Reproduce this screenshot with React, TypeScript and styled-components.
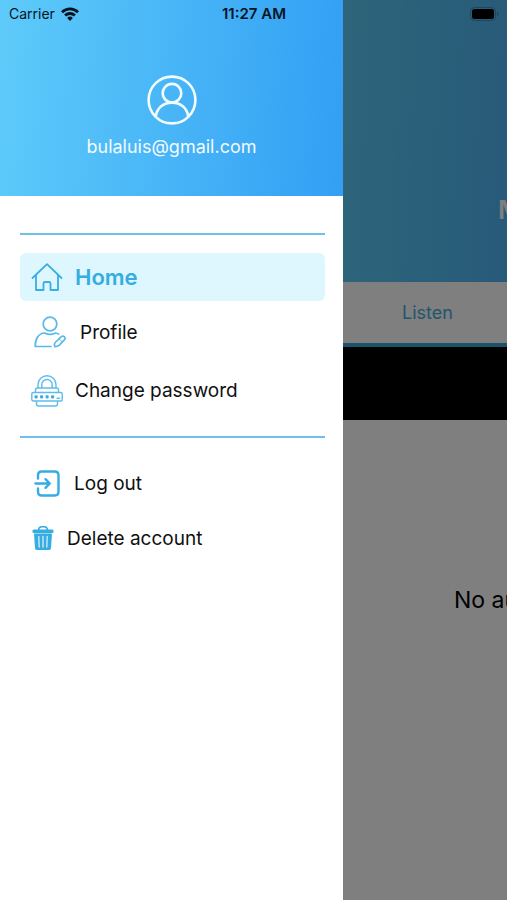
import React from "react";
import styled, { createGlobalStyle, css } from "styled-components";

const GlobalStyle = createGlobalStyle`
  *, *::before, *::after { box-sizing: border-box; }
  body { margin: 0; background: #fff; font-family: Inter, Roboto, sans-serif; color: #101010; }
  h1, p, ul { margin: 0; padding: 0; }
  button { font: inherit; color: inherit; border: 0; background: none; padding: 0; cursor: pointer; }
  svg { display: block; flex: none; }
`;

const Screen = styled.div`
  position: relative;
  display: flex;
  min-height: 100vh;
  overflow: hidden;
`;

const StatusBar = styled.div`
  position: absolute;
  inset: 0 0 auto 0;
  z-index: 2;
  display: grid;
  grid-template-columns: 1fr auto 1fr;
  align-items: center;
  height: 27px;
  padding: 0 8px 0 9px;
  color: #06141f;
  font-size: 14px;
`;

const Carrier = styled.span`
  display: flex;
  align-items: center;
  gap: 6px;
`;

const Clock = styled.span`
  font-size: 15px;
  font-weight: 600;
`;

const BatterySlot = styled.span`
  justify-self: end;
`;

const Drawer = styled.aside`
  flex: 0 0 343px;
  background: #fff;
`;

const Account = styled.header`
  display: flex;
  flex-direction: column;
  align-items: center;
  gap: 10px;
  height: 196px;
  padding-top: 75px;
  background: linear-gradient(94deg, #5ecbfa 0%, #329ff4 100%);
  color: #f2faff;
  font-size: 18px;
  line-height: 24px;
`;

const Nav = styled.nav`
  padding: 37px 18px 0 20px;
`;

const MenuGroup = styled.ul<{ $last?: boolean }>`
  list-style: none;
  border-top: 2px solid #6fc1eb;
  padding: 18px 0;
`;

const MenuItem = styled.button<{ $active?: boolean; $height: number; $gap: number; $inset: number }>`
  display: flex;
  align-items: center;
  width: 100%;
  height: ${(p) => p.$height}px;
  gap: ${(p) => p.$gap}px;
  padding-left: ${(p) => p.$inset}px;
  border-radius: 6px;
  font-size: 19px;
  text-align: left;
  ${(p) =>
    p.$active &&
    css`
      background: #def6fe;
      color: #33ade2;
      font-size: 22px;
      font-weight: 600;
    `}
`;

const Page = styled.main`
  position: relative;
  flex: 0 0 100%;
  background: #fff;
`;

const Scrim = styled.div`
  position: absolute;
  inset: 0;
  background: rgba(0, 0, 0, 0.5);
`;

const Hero = styled.header`
  height: 282px;
  padding: 194px 0 0 155px;
  background: linear-gradient(93deg, #5ecbf6 0%, #4db4f2 36%, #329ff4 100%);
  color: #fff;
`;

const Title = styled.h1`
  font-size: 26px;
  line-height: 32px;
  font-weight: 600;
`;

const Tabs = styled.div`
  display: grid;
  grid-template-columns: repeat(3, 1fr);
  border-bottom: 4px solid #37a6d8;
`;

const Tab = styled.button`
  && { color: #46aadb; }
  height: 61px;
  font-size: 18px;
`;

const Player = styled.section`
  height: 73px;
  background: #000;
`;

const Empty = styled.p`
  padding: 164px 0 0 111px;
  font-size: 23px;
  line-height: 32px;
  color: #000;
`;

const WifiIcon = () => (
  <svg width="18" height="14" viewBox="0 0 18 14" fill="none" stroke="currentColor" strokeWidth="2.8">
    <path d="M1 5.2C5.6.7 12.4.7 17 5.2" />
    <path d="M4.1 8.5c2.8-2.7 7-2.7 9.8 0" />
    <path d="M9 14 6.1 11a4.2 4.2 0 0 1 5.8 0Z" fill="currentColor" stroke="none" />
  </svg>
);

const BatteryIcon = () => (
  <svg width="29" height="14" viewBox="0 0 29 14" fill="none">
    <rect x=".5" y=".5" width="25" height="13" rx="4" stroke="#1e475b" />
    <rect x="2" y="2" width="22" height="10" rx="2.5" fill="#000" />
    <path d="M27 5c2 .6 2 3.4 0 4Z" fill="#1e475b" />
  </svg>
);

const AvatarIcon = () => (
  <svg width="50" height="50" viewBox="0 0 50 50" fill="none" stroke="#f2fbff" strokeWidth="2.6">
    <circle cx="25" cy="25" r="23.4" />
    <circle cx="25" cy="18.2" r="9.3" />
    <path d="M8.8 41.2C10 33 16.5 27.6 25 27.6S40 33 41.2 41.2" />
  </svg>
);

const HomeIcon = () => (
  <svg width="32" height="30" viewBox="0 0 32 30" fill="none" stroke="#3aaee2" strokeWidth="1.8" strokeLinejoin="round" strokeLinecap="round">
    <path d="M1.5 16 16 2.2 30.5 16" />
    <path d="M5 13.5V28h7.500v-6.500q0-1.500 1.500-1.500h4q1.500 0 1.500 1.500V28H27V13.500" />
  </svg>
);

const ProfileIcon = () => (
  <svg width="32" height="32" viewBox="0 0 32 32" fill="none" stroke="#5bb9ea" strokeWidth="1.7" strokeLinejoin="round" strokeLinecap="round">
    <circle cx="16" cy="8" r="6.8" />
    <path d="M17 30.5H1.2C1 22.5 5 17.2 10.5 17c3.5 1.8 7.5 1.8 11 0 1.2.1 2.3.5 3.2 1.2" />
    <path d="M20.8 30.6c-.7-1.7-.3-3.400.9-4.600l5.600-5.300c2.200-1.500 4.600.6 3.300 3l-5.300 5.400c-1.200 1.100-2.700 1.600-4.500 1.500Z" />
    <path d="m25 22.800 3.300 3.200" strokeWidth="1" />
  </svg>
);

const PasswordIcon = () => (
  <svg width="32" height="32" viewBox="0 0 32 32" fill="none" stroke="#5dbcec" strokeWidth="1.4" strokeLinejoin="round">
    <path d="M7 13V9.7a9 9 0 0 1 18 0V13" />
    <path d="M10.800 13V9.700a5.200 5.200 0 0 1 10.400 0V13" />
    <path d="M4.500 17.500V15a2 2 0 0 1 2-2h19a2 2 0 0 1 2 2v2.500M5.500 26v3a2 2 0 0 0 2 2h17a2 2 0 0 0 2-2v-3" />
    <rect x=".8" y="17.5" width="30.4" height="8.5" rx="1.5" />
    <g fill="#42abe4" stroke="none">
      <rect x="3.5" y="20.2" width="3.2" height="3.2" rx=".8" />
      <rect x="9" y="20.2" width="3.2" height="3.2" rx=".8" />
      <rect x="14.5" y="20.2" width="3.2" height="3.2" rx=".8" />
      <rect x="20" y="20.2" width="3.2" height="3.2" rx=".8" />
    </g>
    <path d="M25.5 23.3H29" />
  </svg>
);

const LogoutIcon = () => (
  <svg width="27" height="27" viewBox="0 0 27 27" fill="none" stroke="#35ace2" strokeWidth="2.4" strokeLinecap="round" strokeLinejoin="round">
    <path d="M4 8.500V5.200C4 2.800 5.300 1.500 7.700 1.500h13c2.400 0 3.800 1.300 3.800 3.700v16.600c0 2.400-1.400 3.700-3.800 3.700h-13C5.300 25.500 4 24.200 4 21.800v-3.300" />
    <path d="M1.500 13.500h14M11.500 9.200l4.300 4.300-4.300 4.300" />
  </svg>
);

const TrashIcon = () => (
  <svg width="22" height="24" viewBox="0 0 22 24" fill="#35ace2">
    <path d="M6.500 4C6.800 1.800 8 .8 9.500.8h3c1.500 0 2.700 1 3 3.200" fill="none" stroke="#35ace2" strokeWidth="1.5" />
    <rect x=".5" y="3.4" width="21" height="3.6" rx="1.3" />
    <path d="M2 7.600h18l-1 14.400c-.1 1.200-.9 2-2.100 2H5.100c-1.200 0-2-.8-2.100-2Z" />
    <path d="m6.800 10.500.4 10.500M11 10.500V21M15.200 10.500 14.800 21" stroke="#d5effb" strokeWidth="1.3" strokeLinecap="round" />
  </svg>
);

export default function App() {
  return (
    <>
      <GlobalStyle />
      <Screen>
        <StatusBar>
          <Carrier>
            Carrier <WifiIcon />
          </Carrier>
          <Clock>11:27 AM</Clock>
          <BatterySlot>
            <BatteryIcon />
          </BatterySlot>
        </StatusBar>
        <Drawer>
          <Account>
            <AvatarIcon />
            <p>bulaluis@gmail.com</p>
          </Account>
          <Nav aria-label="Main menu">
            <MenuGroup>
              <li>
                <MenuItem $active aria-current="page" $height={48} $gap={12} $inset={11}>
                  <HomeIcon /> Home
                </MenuItem>
              </li>
              <li>
                <MenuItem $height={62} $gap={14} $inset={14}>
                  <ProfileIcon /> Profile
                </MenuItem>
              </li>
              <li>
                <MenuItem $height={55} $gap={12} $inset={11}>
                  <PasswordIcon /> Change password
                </MenuItem>
              </li>
            </MenuGroup>
            <MenuGroup>
              <li>
                <MenuItem $height={54} $gap={13} $inset={14}>
                  <LogoutIcon /> Log out
                </MenuItem>
              </li>
              <li>
                <MenuItem $height={56} $gap={13} $inset={12}>
                  <TrashIcon /> Delete account
                </MenuItem>
              </li>
            </MenuGroup>
          </Nav>
        </Drawer>
        <Page>
          <Hero>
            <Title>My audios</Title>
          </Hero>
          <Tabs>
            <Tab>Listen</Tab>
          </Tabs>
          <Player aria-label="Player" />
          <Empty>No audios</Empty>
          <Scrim />
        </Page>
      </Screen>
    </>
  );
}
